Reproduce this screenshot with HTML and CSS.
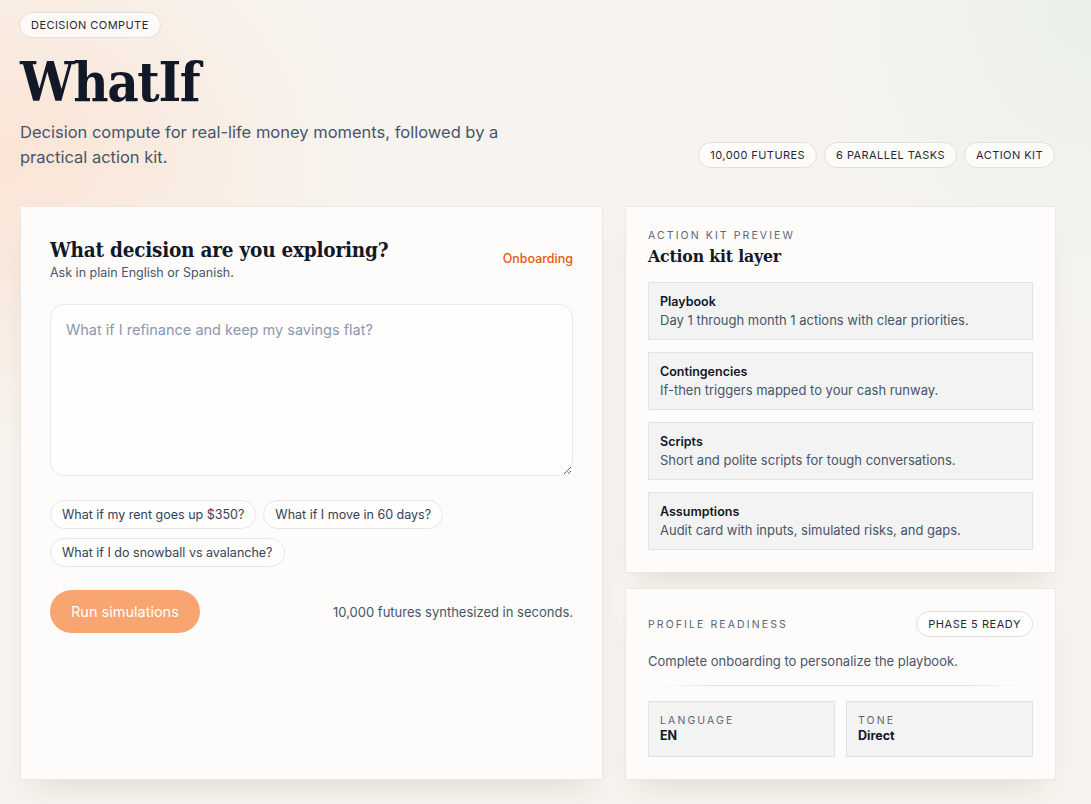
FILE: index.html
```html
<!DOCTYPE html>
<html lang="en">
<head>
<meta charset="utf-8">
<title>WhatIf</title>
<link rel="stylesheet" href="styles.css">
</head>
<body>
<div class="page">
  <header class="hero">
    <div class="hero-left">
      <span class="pill">Decision compute</span>
      <h1 class="brand">WhatIf</h1>
      <p class="lede">Decision compute for real-life money moments, followed by a practical action kit.</p>
    </div>
    <div class="hero-pills">
      <span class="pill">10,000 futures</span>
      <span class="pill">6 parallel tasks</span>
      <span class="pill">Action kit</span>
    </div>
  </header>

  <main class="grid">
    <section class="card ask">
      <div class="ask-head">
        <div>
          <h2 class="ask-title">What decision are you exploring?</h2>
          <p class="ask-sub">Ask in plain English or Spanish.</p>
        </div>
        <span class="status">Onboarding</span>
      </div>
      <textarea class="prompt" placeholder="What if I refinance and keep my savings flat?"></textarea>
      <div class="chips">
        <button class="chip">What if my rent goes up $350?</button>
        <button class="chip">What if I move in 60 days?</button>
        <button class="chip">What if I do snowball vs avalanche?</button>
      </div>
      <div class="run-row">
        <button class="run">Run simulations</button>
        <span class="run-note">10,000 futures synthesized in seconds.</span>
      </div>
    </section>

    <aside class="side">
      <section class="card kit">
        <p class="eyebrow">Action kit preview</p>
        <h3 class="kit-title">Action kit layer</h3>
        <div class="kit-list">
          <div class="kit-item">
            <div class="kit-name">Playbook</div>
            <div class="kit-desc">Day 1 through month 1 actions with clear priorities.</div>
          </div>
          <div class="kit-item">
            <div class="kit-name">Contingencies</div>
            <div class="kit-desc">If-then triggers mapped to your cash runway.</div>
          </div>
          <div class="kit-item">
            <div class="kit-name">Scripts</div>
            <div class="kit-desc">Short and polite scripts for tough conversations.</div>
          </div>
          <div class="kit-item">
            <div class="kit-name">Assumptions</div>
            <div class="kit-desc">Audit card with inputs, simulated risks, and gaps.</div>
          </div>
        </div>
      </section>

      <section class="card profile">
        <div class="profile-head">
          <p class="eyebrow">Profile readiness</p>
          <span class="pill pill-sm">Phase 5 ready</span>
        </div>
        <p class="profile-text">Complete onboarding to personalize the playbook.</p>
        <div class="divider"></div>
        <div class="stats">
          <div class="stat">
            <div class="stat-label">Language</div>
            <div class="stat-value">EN</div>
          </div>
          <div class="stat">
            <div class="stat-label">Tone</div>
            <div class="stat-value">Direct</div>
          </div>
        </div>
      </section>
    </aside>
  </main>
</div>
</body>
</html>
```

FILE: styles.css
```css
* { box-sizing: border-box; }

html, body {
  margin: 0;
  height: 100%;
}

body {
  font-family: "Inter", "DejaVu Sans", sans-serif;
  color: #0f172a;
  background:
    radial-gradient(ellipse 520px 420px at 0% 20%, rgba(251, 226, 210, 0.9), rgba(251, 226, 210, 0) 70%),
    radial-gradient(ellipse 420px 500px at 100% 0%, rgba(232, 240, 232, 0.9), rgba(232, 240, 232, 0) 70%),
    #f7f4ef;
  overflow: hidden;
}

.page {
  padding: 12px 36px 0 20px;
}

.hero {
  display: flex;
  justify-content: space-between;
  align-items: flex-end;
}

.hero-left {
  display: flex;
  flex-direction: column;
  align-items: flex-start;
}

.pill {
  display: inline-flex;
  align-items: center;
  height: 26px;
  padding: 0 11px;
  border: 1px solid #e1e0de;
  border-radius: 999px;
  background: rgba(255, 255, 255, 0.7);
  font-size: 11px;
  letter-spacing: 0.04em;
  text-transform: uppercase;
  color: #1f2937;
  white-space: nowrap;
}

.hero-left > .pill {
  margin-left: -1px;
}

.brand {
  margin: 12px 0 0;
  font-family: "DejaVu Serif Condensed", "DejaVu Serif", "Liberation Serif", serif;
  font-stretch: condensed;
  font-weight: 700;
  font-size: 54px;
  line-height: 64px;
  letter-spacing: -0.025em;
  color: #111827;
}

.lede {
  margin: 6px 0 0;
  max-width: 510px;
  font-size: 16.5px;
  line-height: 25px;
  color: #475569;
}

.hero-pills {
  display: flex;
  gap: 7px;
  margin-bottom: 2px;
}

.grid {
  display: grid;
  grid-template-columns: 583px 431px;
  gap: 22px;
  margin-top: 36px;
}

.card {
  background: #fdfcfb;
  border: 1px solid #ebe8e4;
  box-shadow: 0 18px 30px -14px rgba(60, 40, 20, 0.14);
}

.ask {
  padding: 30px 29px;
  height: 574px;
}

.ask-head {
  display: flex;
  justify-content: space-between;
  align-items: flex-start;
}

.ask-title {
  margin: 0;
  font-family: "DejaVu Serif Condensed", "DejaVu Serif", "Liberation Serif", serif;
  font-stretch: condensed;
  font-weight: 700;
  font-size: 20.5px;
  line-height: 26px;
  letter-spacing: -0.01em;
  color: #111827;
}

.ask-sub {
  margin: 2px 0 0;
  font-size: 12.5px;
  color: #475569;
}

.status {
  margin-top: 14px;
  font-size: 12.5px;
  font-weight: 500;
  color: #ea580c;
}

.prompt {
  display: block;
  width: 100%;
  height: 172px;
  margin-top: 24px;
  padding: 16px 15px;
  border: 1px solid #e6e9f0;
  border-radius: 14px;
  background: #fffefd;
  font-family: inherit;
  font-size: 14.5px;
  color: #0f172a;
  resize: vertical;
  outline: none;
}

.prompt::placeholder {
  color: #8a98b0;
}

.chips {
  display: flex;
  flex-wrap: wrap;
  gap: 9px 7px;
  margin-top: 24px;
}

.chip {
  height: 29px;
  padding: 0 11px;
  border: 1px solid #e3e7f0;
  border-radius: 999px;
  background: #fffefd;
  font-family: inherit;
  font-size: 12.5px;
  color: #334155;
  cursor: pointer;
}

.run-row {
  display: flex;
  justify-content: space-between;
  align-items: center;
  margin-top: 23px;
}

.run {
  height: 43px;
  padding: 0 21px;
  border: 0;
  border-radius: 999px;
  background: #f9a572;
  font-family: inherit;
  font-size: 14.5px;
  color: #fff;
  cursor: pointer;
}

.run-note {
  font-size: 13px;
  color: #475569;
}

.side {
  display: flex;
  flex-direction: column;
  gap: 15px;
}

.kit {
  padding: 22px 22px 22px;
}

.eyebrow {
  margin: 0;
  font-size: 10.5px;
  letter-spacing: 0.2em;
  text-transform: uppercase;
  color: #5b6577;
}

.kit-title {
  margin: 2px 0 0;
  font-family: "DejaVu Serif Condensed", "DejaVu Serif", "Liberation Serif", serif;
  font-stretch: condensed;
  font-weight: 700;
  font-size: 17.5px;
  line-height: 24px;
  letter-spacing: -0.01em;
  color: #111827;
}

.kit-list {
  display: flex;
  flex-direction: column;
  gap: 12px;
  margin-top: 14px;
}

.kit-item {
  height: 58px;
  padding: 10px 11px;
  background: #f3f3f3;
  border: 1px solid #e2e2e2;
}

.kit-name {
  font-size: 12.5px;
  font-weight: 600;
  color: #111827;
  line-height: 18px;
}

.kit-desc {
  font-size: 13px;
  color: #475569;
  line-height: 18px;
}

.profile {
  padding: 22px 22px 22px;
}

.profile-head {
  display: flex;
  justify-content: space-between;
  align-items: center;
}

.pill-sm {
  letter-spacing: 0.05em;
}

.profile-text {
  margin: 16px 0 0;
  font-size: 13px;
  color: #475569;
}

.divider {
  height: 1px;
  margin: 16px 10px 0;
  background: linear-gradient(90deg, rgba(226,226,226,0), #e4e2df 15%, #e4e2df 85%, rgba(226,226,226,0));
}

.stats {
  display: grid;
  grid-template-columns: 1fr 1fr;
  gap: 11px;
  margin-top: 15px;
}

.stat {
  height: 56px;
  padding: 11px 11px;
  background: #f3f3f3;
  border: 1px solid #e2e2e2;
}

.stat-label {
  font-size: 10.5px;
  letter-spacing: 0.2em;
  text-transform: uppercase;
  color: #5b6577;
  line-height: 15px;
}

.stat-value {
  font-size: 12.5px;
  font-weight: 700;
  color: #111827;
  line-height: 16px;
}
```
